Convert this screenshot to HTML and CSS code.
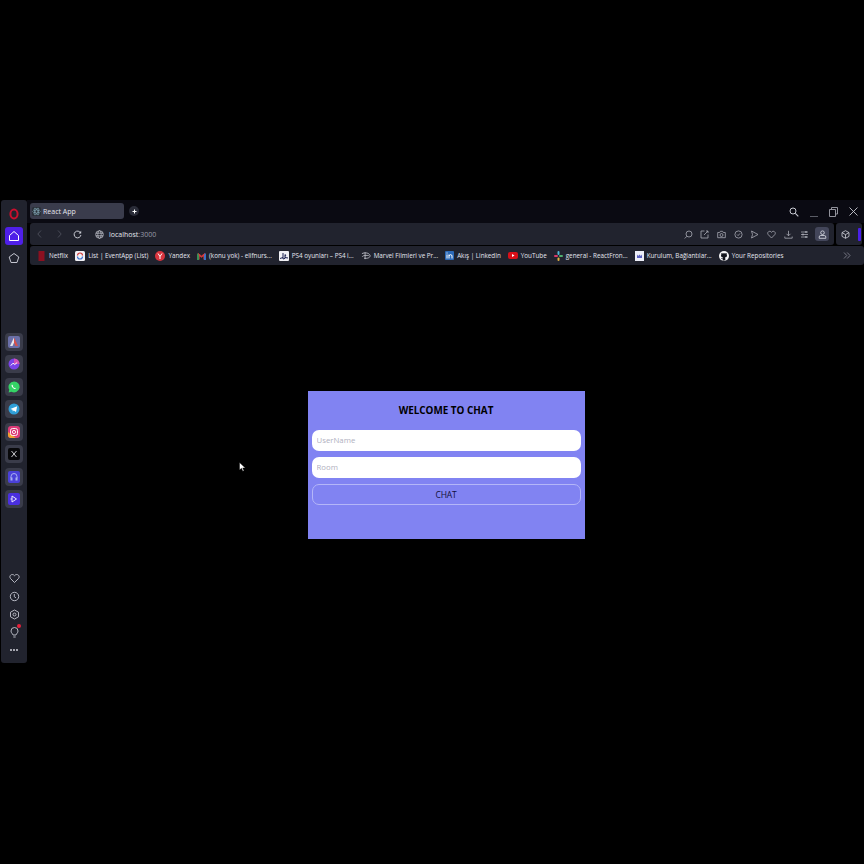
FILE: index.html
```html
<!DOCTYPE html>
<html>
<head>
  <title>React App</title>
  <link rel="stylesheet" href="styles.css">
</head>
<body>
  <div id="browser">
    <!-- left sidebar -->
    <div class="sidebar">
      <div class="sideTop">
        <div class="sideIcon">
          <svg width="12" height="12" viewBox="0 0 12 12"><ellipse cx="6" cy="6" rx="3.600" ry="4.400" fill="none" stroke="#c8102e" stroke-width="2"/></svg>
        </div>
        <div class="sideIcon homeBtn">
          <svg width="12" height="12" viewBox="0 0 12 12"><path d="M1.500 5.500 6 1.500l4.500 4v5h-9z" fill="none" stroke="#fff" stroke-width="1"/></svg>
        </div>
        <div class="sideIcon">
          <svg width="12" height="12" viewBox="0 0 12 12"><path d="M6 1.500 10.800 5 9 10.500H3L1.200 5z" fill="none" stroke="#c4c6d0" stroke-width="1"/></svg>
        </div>
      </div>
      <div class="sideApps">
        <div class="appBtn">
          <svg width="12" height="12" viewBox="0 0 12 12"><rect width="12" height="12" rx="2" fill="#6a6fa8"/><path d="M6 1.500 2 10h2.500L6 6.500z" fill="#e8e8ef"/><path d="M6 1.500 10 10H7.500L6 6.500z" fill="#d8504a"/></svg>
        </div>
        <div class="appBtn">
          <svg width="12" height="12" viewBox="0 0 12 12"><circle cx="6" cy="6" r="5.500" fill="#7a42e8"/><path d="M6 .5A5.500 5.500 0 0 1 11.500 6H6z" fill="#d04fb8"/><path d="m2.800 7.500 2.200-2.300 1.800 1.300 2.400-2" fill="none" stroke="#fff" stroke-width="1"/></svg>
        </div>
        <div class="appBtn">
          <svg width="12" height="12" viewBox="0 0 12 12"><path d="M6 .5a5.500 5.500 0 0 0-4.700 8.300L.6 11.500l2.800-.7A5.500 5.500 0 1 0 6 .5z" fill="#35d366"/><path d="M4 3.500c-.8.800-.5 2 .7 3.300s2.500 1.700 3.300.8L7 6.700l-.8.400-1.300-1.300.4-.8z" fill="#fff"/></svg>
        </div>
        <div class="appBtn">
          <svg width="12" height="12" viewBox="0 0 12 12"><circle cx="6" cy="6" r="5.500" fill="#2f9fd8"/><path d="M2.300 5.900 9.200 3.200 8 9 5.800 7.500 4.800 8.500 4.500 6.800z" fill="#fff"/></svg>
        </div>
        <div class="appBtn">
          <svg width="12" height="12" viewBox="0 0 12 12"><rect width="12" height="12" rx="3" fill="#dc3a78"/><path d="M0 9a3 3 0 0 0 3 3h5L0 6z" fill="#f0a030"/><rect x="2.500" y="2.500" width="7" height="7" rx="2" fill="none" stroke="#fff" stroke-width=".9"/><circle cx="6" cy="6" r="1.600" fill="none" stroke="#fff" stroke-width=".9"/></svg>
        </div>
        <div class="appBtn">
          <svg width="12" height="12" viewBox="0 0 12 12"><rect width="12" height="12" rx="2" fill="#08080a"/><path d="m3.500 3 5 6M8.500 3l-5 6" stroke="#c8c8cc" stroke-width="1"/></svg>
        </div>
        <div class="appBtn">
          <svg width="12" height="12" viewBox="0 0 12 12"><rect width="12" height="12" rx="2" fill="#4a40d8"/><path d="M3 7V5.500a3 3 0 0 1 6 0V7" fill="none" stroke="#a8b0f0" stroke-width="1"/><rect x="2.500" y="6.500" width="2" height="3" fill="#a8b0f0"/><rect x="7.500" y="6.500" width="2" height="3" fill="#a8b0f0"/></svg>
        </div>
        <div class="appBtn">
          <svg width="12" height="12" viewBox="0 0 12 12"><rect width="12" height="12" rx="2" fill="#4a2fe0"/><path d="M4 3v6l4.500-3z" fill="none" stroke="#e8e8ff" stroke-width="1"/><path d="M2.500 6H4" stroke="#e8e8ff" stroke-width="1"/></svg>
        </div>
      </div>
      <div class="sideBottom">
        <div class="sideIcon small">
          <svg width="11" height="11" viewBox="0 0 11 11"><path d="M5.500 9.500 1.500 5.500C0 3.500 1.500 1.500 3.300 1.500c1 0 1.700.5 2.200 1.200.5-.7 1.200-1.200 2.200-1.200 1.800 0 3.300 2 1.800 4z" fill="none" stroke="#c4c6d0" stroke-width=".9"/></svg>
        </div>
        <div class="sideIcon small">
          <svg width="11" height="11" viewBox="0 0 11 11"><circle cx="5.500" cy="5.500" r="4.200" fill="none" stroke="#c4c6d0" stroke-width=".9"/><path d="M5.300 3v2.700l1.700 1.200" fill="none" stroke="#c4c6d0" stroke-width=".9"/></svg>
        </div>
        <div class="sideIcon small">
          <svg width="11" height="11" viewBox="0 0 11 11"><path d="M5.500 1 9.500 3.200v4.600L5.500 10l-4-2.200V3.200z" fill="none" stroke="#c4c6d0" stroke-width=".9"/><circle cx="5.500" cy="5.500" r="1.500" fill="none" stroke="#c4c6d0" stroke-width=".9"/></svg>
        </div>
        <div class="sideIcon small tip">
          <svg width="11" height="11" viewBox="0 0 11 11"><path d="M4 8C3.700 6.500 2 6 2 4a3.500 3.500 0 0 1 7 0c0 2-1.700 2.500-2 4zM4.300 10h2.400" fill="none" stroke="#c4c6d0" stroke-width=".9"/></svg>
          <span class="redDot"></span>
        </div>
        <div class="sideIcon small dots">
          <span></span><span></span><span></span>
        </div>
      </div>
    </div>

    <div class="main">
      <!-- tabs -->
      <div class="tabStrip">
        <div class="tab">
          <svg width="9" height="9" viewBox="0 0 9 9"><rect width="9" height="9" rx="1.500" fill="#2a3038"/><g fill="none" stroke="#8fb8c8" stroke-width=".5"><ellipse cx="4.500" cy="4.500" rx="3.800" ry="1.500"/><ellipse cx="4.500" cy="4.500" rx="3.800" ry="1.500" transform="rotate(60 4.500 4.500)"/><ellipse cx="4.500" cy="4.500" rx="3.800" ry="1.500" transform="rotate(120 4.500 4.500)"/></g></svg>
          <span>React App</span>
        </div>
        <div class="newTab">
          <svg width="7" height="7" viewBox="0 0 7 7"><path d="M3.500 1.500v4M1.500 3.500h4" stroke="#fff" stroke-width="1"/></svg>
        </div>
        <div class="windowBtns">
          <svg width="10" height="10" viewBox="0 0 10 10"><circle cx="4" cy="4" r="3" fill="none" stroke="#c8cad2"/><path d="m6.300 6.300 3 3" stroke="#c8cad2" stroke-width="1.100"/></svg>
          <svg width="8" height="10" viewBox="0 0 8 10"><path d="M0 9.500h8" stroke="#5a5c66"/></svg>
          <svg width="9" height="10" viewBox="0 0 9 10"><path d="M.5 2.500h6v7h-6zM2.500 2.500V.5h6v6.500H6.500" fill="none" stroke="#a0a2ac" stroke-width=".9"/></svg>
          <svg width="9" height="9" viewBox="0 0 9 9"><path d="m.5.500 8 8M8.500.500l-8 8" stroke="#c8cad2" stroke-width=".9"/></svg>
        </div>
      </div>

      <!-- address row -->
      <div class="addressRow">
        <div class="addressBar">
          <svg class="navIcon" width="5" height="8" viewBox="0 0 5 8"><path d="M4 .5.800 4 4 7.500" fill="none" stroke="#4a4c58"/></svg>
          <svg class="navIcon fwd" width="5" height="8" viewBox="0 0 5 8"><path d="m1 .5L4.200 4 1 7.500" fill="none" stroke="#4a4c58"/></svg>
          <svg class="navIcon reload" width="9" height="9" viewBox="0 0 9 9"><path d="M7.600 3A3.400 3.400 0 1 0 7.900 5" fill="none" stroke="#c8cad2"/><path d="M8.200.8v2.700H5.600z" fill="#c8cad2"/></svg>
          <svg class="navIcon globe" width="9" height="9" viewBox="0 0 9 9"><g fill="none" stroke="#c8cad2" stroke-width=".7"><circle cx="4.500" cy="4.500" r="3.800"/><ellipse cx="4.500" cy="4.500" rx="1.700" ry="3.800"/><path d="M.7 3.200h7.600M.7 5.800h7.600"/></g></svg>
          <span class="url">localhost<em>:3000</em></span>
          <div class="toolIcons">
            <svg width="9" height="9" viewBox="0 0 9 9"><circle cx="5" cy="4" r="3" fill="none" stroke="#a8aab4" stroke-width=".8"/><path d="M3 6.200.7 8.500" stroke="#a8aab4" stroke-width=".8"/></svg>
            <svg width="9" height="9" viewBox="0 0 9 9"><path d="M4.500 1H1v7h7V4.500M4 5l4-4M6 1h2v2" fill="none" stroke="#a8aab4" stroke-width=".8"/></svg>
            <svg width="9" height="9" viewBox="0 0 9 9"><path d="M.7 2.500h2L3.400 1.300h2.200l.7 1.200h2v5.200H.7z" fill="none" stroke="#a8aab4" stroke-width=".8"/><circle cx="4.500" cy="5" r="1.500" fill="none" stroke="#a8aab4" stroke-width=".8"/></svg>
            <svg width="9" height="9" viewBox="0 0 9 9"><circle cx="4.500" cy="4.500" r="3.600" fill="none" stroke="#a8aab4" stroke-width=".8"/><path d="m3 4.500 1.100 1.100L6 3.400" fill="none" stroke="#a8aab4" stroke-width=".8"/></svg>
            <svg width="9" height="9" viewBox="0 0 9 9"><path d="M1.500 1 8 4.500 1.500 8l1-3.500z" fill="none" stroke="#a8aab4" stroke-width=".8"/></svg>
            <svg width="9" height="9" viewBox="0 0 9 9"><path d="M4.500 8 1.200 4.600C0 3 1.200 1.300 2.700 1.300c.8 0 1.400.4 1.800 1 .4-.6 1-1 1.800-1 1.500 0 2.700 1.700 1.500 3.300z" fill="none" stroke="#a8aab4" stroke-width=".8"/></svg>
            <svg width="9" height="9" viewBox="0 0 9 9"><path d="M4.500.8v5M2.500 3.800l2 2 2-2M.8 6.500v1.700h7.400V6.500" fill="none" stroke="#a8aab4" stroke-width=".8"/></svg>
            <svg width="9" height="9" viewBox="0 0 9 9"><path d="M1 2h7M1 4.500h7M1 7h7" stroke="#a8aab4" stroke-width=".8"/><circle cx="6" cy="2" r=".9" fill="#a8aab4"/><circle cx="3" cy="4.500" r=".9" fill="#a8aab4"/><circle cx="6" cy="7" r=".9" fill="#a8aab4"/></svg>
            <div class="profileBtn">
              <svg width="9" height="9" viewBox="0 0 9 9"><circle cx="4.500" cy="2.700" r="1.800" fill="none" stroke="#e0e2ea" stroke-width=".8"/><path d="M1.200 8.300V7a1.500 1.500 0 0 1 1.500-1.500h3.600A1.500 1.500 0 0 1 7.800 7v1.300z" fill="none" stroke="#e0e2ea" stroke-width=".8"/></svg>
            </div>
          </div>
        </div>
        <div class="extBox">
          <svg width="9" height="9" viewBox="0 0 9 9"><path d="M4.500.7 8 2.600v3.800L4.500 8.300 1 6.400V2.600zM1 2.600l3.500 2 3.500-2M4.500 4.600v3.700" fill="none" stroke="#d0d2da" stroke-width=".8"/></svg>
          <span class="extBar"></span>
        </div>
      </div>

      <!-- bookmarks -->
      <div class="bookmarks">
        <div class="mark">
          <svg width="9" height="10" viewBox="0 0 9 10"><rect x="1.500" width="6" height="10" fill="#8c1020"/></svg>
          <span>Netflix</span>
        </div>
        <div class="mark">
          <svg width="10" height="10" viewBox="0 0 10 10"><rect width="10" height="10" rx="1.500" fill="#f0f0f5"/><path d="M2.500 4.500a2.500 2.500 0 0 1 5 0" fill="none" stroke="#d03a3a" stroke-width="1.200"/><path d="M2.500 5.500a2.500 2.500 0 0 0 5 0" fill="none" stroke="#3a70d0" stroke-width="1.200"/></svg>
          <span>List | EventApp (List)</span>
        </div>
        <div class="mark">
          <svg width="10" height="10" viewBox="0 0 10 10"><circle cx="5" cy="5" r="5" fill="#d8343e"/><path d="m3 2.500 2 3 2-3M5 5.500V8" fill="none" stroke="#fff"/></svg>
          <span>Yandex</span>
        </div>
        <div class="mark">
          <svg width="9" height="8" viewBox="0 0 9 8"><path d="M2 7.500V3l2.500 2L7 3v4.500" fill="none" stroke="#d83a3a" stroke-width="1.200"/><path d="M1 8V1.500" stroke="#3a9a5a" stroke-width="1.800"/><path d="M8 8V1.500" stroke="#3a7ad8" stroke-width="1.800"/><path d="M1 1.500 4.500 4 8 1.500" fill="none" stroke="#d83a3a" stroke-width="1"/></svg>
          <span>(konu yok) - elifnurs...</span>
        </div>
        <div class="mark">
          <svg width="10" height="10" viewBox="0 0 10 10"><rect width="10" height="10" rx="1" fill="#f0f0f5"/><path d="M4 2v6l2-.6V3.500c1 .2 1 1.600 0 1.500" fill="none" stroke="#1a2050" stroke-width="1"/><path d="M1 7.500 4 6.500M6 6.500 9 7" stroke="#1a2050"/></svg>
          <span>PS4 oyunları – PS4 i...</span>
        </div>
        <div class="mark">
          <svg width="10" height="9" viewBox="0 0 11 9"><path d="M1 2.500C4 .8 9 1.500 10 4.500 10.500 7 6.500 8 3.500 7.500M4.500 1v7.500M1.500 6c0-1 2-2 7-1.500" fill="none" stroke="#d8dae2" stroke-width=".8"/></svg>
          <span>Marvel Filmleri ve Pr...</span>
        </div>
        <div class="mark">
          <svg width="9" height="9" viewBox="0 0 9 9"><rect width="9" height="9" rx="1" fill="#2c6ab8"/><path d="M2 3.500V7.500M4 7.500V3.500M4 5c.5-1.800 3-1.800 3 0v2.500" fill="none" stroke="#fff"/><rect x="1.500" y="1.500" width="1" height="1" fill="#fff"/></svg>
          <span>Akış | LinkedIn</span>
        </div>
        <div class="mark">
          <svg width="10" height="7" viewBox="0 0 10 7"><rect width="10" height="7" rx="2" fill="#d80f18"/><path d="M4 2v3l2.500-1.500z" fill="#fff"/></svg>
          <span>YouTube</span>
        </div>
        <div class="mark">
          <svg width="9" height="10" viewBox="0 0 9 10"><rect x="3.500" width="2" height="4" rx="1" fill="#50b8d8"/><rect y="4" width="4" height="2" rx="1" fill="#d83a6a"/><rect x="5" y="4" width="4" height="2" rx="1" fill="#50b070"/><rect x="3.500" y="6.500" width="2" height="3.500" rx="1" fill="#e0b040"/></svg>
          <span>general - ReactFron...</span>
        </div>
        <div class="mark">
          <svg width="9" height="10" viewBox="0 0 9 10"><rect width="9" height="10" fill="#eceef8"/><path d="M2 7V3.500l1.200 1.500L4.500 3.500 5.800 5 7 3.500V7z" fill="#5a60c0"/></svg>
          <span>Kurulum, Bağlantılar...</span>
        </div>
        <div class="mark">
          <svg width="10" height="10" viewBox="0 0 10 10"><circle cx="5" cy="5" r="5" fill="#f4f4f6"/><path d="M3.700 9.800V8c-1 .2-1.500-.3-1.800-1 .6.300 1 .6 1.800.4 0-.4.200-.7.400-.9C2.800 6.300 2 5.700 2 4.400c0-.5.200-.9.400-1.200-.1-.4-.1-.9.100-1.300.5 0 1 .3 1.300.5a4 4 0 0 1 2.400 0c.3-.2.800-.5 1.300-.5.200.4.200.9.100 1.300.2.300.4.700.4 1.200 0 1.300-.8 1.900-2.100 2.100.3.300.4.700.4 1.200v1.600z" fill="#14161e"/></svg>
          <span>Your Repositories</span>
        </div>
        <svg class="moreMarks" width="8" height="7" viewBox="0 0 8 7"><path d="m1 .5 2.800 3L1 6.500M4.200.5 7 3.500 4.200 6.500" fill="none" stroke="#8a8c98" stroke-width=".8"/></svg>
      </div>

      <!-- page content -->
      <div class="page">
        <svg class="cursor" width="7" height="10" viewBox="0 0 7 10"><path d="M.5.500v7.500l2-1.700 1.300 3 1.200-.5-1.300-2.900h2.600z" fill="#fff" stroke="#000" stroke-width=".4"/></svg>
        <form class="chatCard">
          <h1>WELCOME TO CHAT</h1>
          <input type="text" placeholder="UserName">
          <input type="text" placeholder="Room">
          <button type="button">CHAT</button>
        </form>
      </div>
    </div>
  </div>
</body>
</html>
```

FILE: styles.css
```css
body {
  margin: 0;
  min-height: 864px;
  background-color: #000;
  font-family: "Open Sans", "Noto Sans", sans-serif;
  overflow: hidden;
}

#browser {
  display: flex;
  height: 464px;
  margin-top: 200px;
  background-color: #000;
}

.sidebar {
  display: flex;
  flex-direction: column;
  align-items: center;
  width: 26px;
  height: 463px;
  margin-left: 1px;
  background-color: #21232e;
  border-radius: 3px;
}

.sideTop {
  display: flex;
  flex-direction: column;
  align-items: center;
  gap: 4px;
  padding-top: 5px;
}

.sideIcon {
  display: flex;
  align-items: center;
  justify-content: center;
  width: 18px;
  height: 18px;
}

.homeBtn {
  background-color: #4f1fe8;
  border-radius: 3px;
}

.sideApps {
  display: flex;
  flex-direction: column;
  align-items: center;
  gap: 4.500px;
  margin-top: 65.500px;
}

.appBtn {
  display: flex;
  align-items: center;
  justify-content: center;
  width: 18px;
  height: 18px;
  background-color: #3a3c4a;
  border-radius: 4px;
}

.sideBottom {
  display: flex;
  flex-direction: column;
  align-items: center;
  margin-top: auto;
  padding-bottom: 4px;
}

.sideBottom .small {
  position: relative;
}

.redDot {
  position: absolute;
  top: 1px;
  right: 2px;
  width: 4px;
  height: 4px;
  background-color: #e8203a;
  border-radius: 50%;
}

.dots {
  gap: 1px;
}

.dots span {
  width: 2px;
  height: 2px;
  background-color: #d0d2da;
  border-radius: 50%;
}

.main {
  flex: 1;
  display: flex;
  flex-direction: column;
  min-width: 0;
  margin-left: 3px;
}

.tabStrip {
  display: flex;
  align-items: center;
  height: 23px;
  margin-left: -3px;
  padding-left: 3px;
  background-color: #0a0a12;
}

.tab {
  display: flex;
  align-items: center;
  gap: 2px;
  width: 92px;
  height: 16px;
  margin-bottom: 1px;
  padding-left: 2px;
  background-color: #3a3c4c;
  border-radius: 3px;
  color: #e4e6ee;
  font-size: 7px;
}

.newTab {
  display: flex;
  align-items: center;
  justify-content: center;
  width: 10px;
  height: 10px;
  margin-bottom: 1px;
  margin-left: 5px;
  background-color: #2a2c38;
  border-radius: 50%;
}

.windowBtns {
  display: flex;
  align-items: center;
  gap: 11px;
  margin-left: auto;
  padding-right: 6px;
}

.addressRow {
  display: flex;
  gap: 2px;
  height: 22px;
}

.addressBar {
  flex: 1;
  display: flex;
  align-items: center;
  padding-left: 7px;
  background-color: #21232e;
  border-radius: 3px;
}

.navIcon.fwd {
  margin-left: 15px;
}

.navIcon.reload {
  margin-left: 11px;
}

.navIcon.globe {
  margin-left: 13px;
}

.url {
  margin-left: 5px;
  color: #e4e6ee;
  font-size: 7px;
}

.url em {
  color: #9a9ca8;
  font-style: normal;
}

.toolIcons {
  display: flex;
  align-items: center;
  gap: 7.700px;
  margin-left: auto;
  padding-right: 5px;
}

.profileBtn {
  display: flex;
  align-items: center;
  justify-content: center;
  width: 14px;
  height: 14px;
  margin-left: -2px;
  background-color: #43465a;
  border-radius: 3px;
}

.extBox {
  display: flex;
  align-items: center;
  justify-content: space-between;
  width: 26px;
  margin-right: 2px;
  padding: 0 1px 0 5px;
  box-sizing: border-box;
  background-color: #21232e;
  border-radius: 3px;
}

.extBar {
  width: 3px;
  height: 13px;
  background-color: #4a20e8;
  border-radius: 1px;
}

.bookmarks {
  display: flex;
  align-items: center;
  gap: 7px;
  height: 19px;
  margin-top: 1px;
  padding-left: 7px;
  background-color: #21232e;
  border-radius: 3px;
  color: #e4e6ee;
  font-size: 6.300px;
  white-space: nowrap;
}

.mark {
  display: flex;
  align-items: center;
  gap: 3px;
}

.moreMarks {
  margin-left: auto;
  margin-right: 13px;
}

.page {
  flex: 1;
  display: flex;
  align-items: center;
  justify-content: center;
  position: relative;
  padding-right: 2px;
  background-color: #000;
}

.cursor {
  position: absolute;
  left: 209px;
  top: 197px;
}

.chatCard {
  display: flex;
  flex-direction: column;
  gap: 6px;
  width: 277px;
  height: 148px;
  padding: 0 4px;
  box-sizing: border-box;
  background-color: #8183f2;
}

.chatCard h1 {
  margin: 12px 0 7px;
  color: #000;
  font-size: 9.900px;
  font-weight: 700;
  line-height: 14px;
  text-align: center;
}

.chatCard input,
.chatCard button {
  height: 21px;
  box-sizing: border-box;
  border-radius: 7px;
  font-family: inherit;
}

.chatCard input {
  padding: 0 5px;
  background-color: #fff;
  border: none;
  font-size: 7.800px;
}

.chatCard input::placeholder {
  color: #b0b0c0;
}

.chatCard button {
  background-color: transparent;
  border: 1px solid #b4b6f8;
  color: #10103a;
  font-size: 8.500px;
  letter-spacing: -.2px;
}
```
